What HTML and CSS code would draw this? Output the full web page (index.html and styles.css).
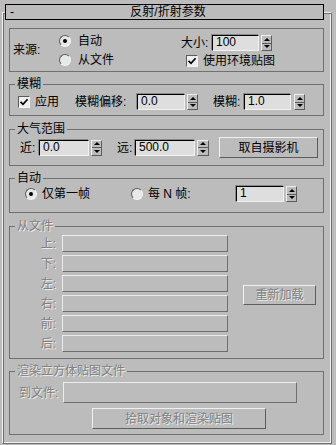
FILE: index.html
```html
<!DOCTYPE html>
<html lang="zh">
<head>
    <meta charset="UTF-8">
    <title>反射/折射参数</title>
    <link rel="stylesheet" href="styles.css">
</head>
<body>

    <div class="rollout">
        <div class="rollout-title"><span class="minus">-</span><span class="caption">反射/折射参数</span></div>

        <!-- source -->
        <div class="group g-source">
            <div class="src-label">来源:</div>
            <div class="src-radios">
                <div class="radio-row"><span class="radio on"></span><span class="opt">自动</span></div>
                <div class="radio-row"><span class="radio"></span><span class="opt">从文件</span></div>
            </div>
            <div class="src-right">
                <div class="row size-row">
                    <span class="lbl lbl-size">大小:</span>
                    <span class="input in-size">100</span>
                    <span class="spin sp-size"><i></i><i></i></span>
                </div>
                <div class="row env-row">
                    <span class="check on"><svg viewBox="0 0 10 10"><path d="M1.5 4.8 L4 7.3 L8.6 2.2"/></svg></span>
                    <span class="opt">使用环境贴图</span>
                </div>
            </div>
        </div>

        <!-- blur -->
        <div class="group g-blur">
            <div class="legend">模糊</div>
            <div class="row blur-row">
                <span class="check on"><svg viewBox="0 0 10 10"><path d="M1.5 4.8 L4 7.3 L8.6 2.2"/></svg></span>
                <span class="lbl lbl-apply">应用</span>
                <span class="lbl lbl-offset">模糊偏移:</span>
                <span class="input in-offset">0.0</span>
                <span class="spin sp-offset"><i></i><i></i></span>
                <span class="lbl lbl-blur">模糊:</span>
                <span class="input in-blur">1.0</span>
                <span class="spin sp-blur"><i></i><i></i></span>
            </div>
        </div>

        <!-- atmosphere -->
        <div class="group g-range">
            <div class="legend">大气范围</div>
            <div class="row range-row">
                <span class="lbl lbl-near">近:</span>
                <span class="input in-near">0.0</span>
                <span class="spin sp-near"><i></i><i></i></span>
                <span class="lbl lbl-far">远:</span>
                <span class="input in-far">500.0</span>
                <span class="spin sp-far"><i></i><i></i></span>
                <span class="btn btn-camera">取自摄影机</span>
            </div>
        </div>

        <!-- auto -->
        <div class="group g-auto">
            <div class="legend">自动</div>
            <div class="row auto-row">
                <span class="radio on r-first"></span>
                <span class="opt opt-first">仅第一帧</span>
                <span class="radio r-every"></span>
                <span class="opt opt-every">每 N 帧:</span>
                <span class="input in-every">1</span>
                <span class="spin sp-every"><i></i><i></i></span>
            </div>
        </div>

        <!-- from file (disabled) -->
        <div class="group g-file off">
            <div class="legend">从文件</div>
            <div class="file-body">
                <div class="file-rows">
                    <div class="file-row"><span class="lbl side">上:</span><span class="input side-in"></span></div>
                    <div class="file-row"><span class="lbl side">下:</span><span class="input side-in"></span></div>
                    <div class="file-row"><span class="lbl side">左:</span><span class="input side-in"></span></div>
                    <div class="file-row"><span class="lbl side">右:</span><span class="input side-in"></span></div>
                    <div class="file-row"><span class="lbl side">前:</span><span class="input side-in"></span></div>
                    <div class="file-row"><span class="lbl side">后:</span><span class="input side-in"></span></div>
                </div>
                <span class="btn btn-reload">重新加载</span>
            </div>
        </div>

        <!-- render cube map (disabled) -->
        <div class="group g-render off">
            <div class="legend">渲染立方体贴图文件</div>
            <div class="row tofile-row">
                <span class="lbl lbl-tofile">到文件:</span>
                <span class="input in-tofile"></span>
            </div>
            <div class="row pick-row">
                <span class="btn btn-pick">拾取对象和渲染贴图</span>
            </div>
        </div>
    </div>

</body>
</html>
```

FILE: styles.css
```css
* {
    box-sizing: border-box;
}

body {
    margin: 0;
    width: 336px;
    height: 445px;
    overflow: hidden;
    background-color: #bcbcbc;
    font-family: "Liberation Sans", "Noto Sans CJK SC", sans-serif;
    font-size: 12px;
    line-height: 14px;
    color: #000;
}

.rollout {
    margin: 12px 4px 0 2px;
    height: 432px;
    border: 1px solid;
    border-color: #f0f0f0 #6e6e6e #6e6e6e #f0f0f0;
    box-shadow: inset 1px 1px 0 #6e6e6e, inset -1px -1px 0 #f0f0f0;
}

.rollout-title {
    display: flex;
    height: 16px;
    margin: -9px 7px 0 2px;
    border: 1px solid #000;
    background-color: #bcbcbc;
}

.minus {
    width: 14px;
    padding-left: 4px;
}

.caption {
    flex: 1;
    text-align: center;
    padding-right: 7px;
}

/* group boxes */
.group {
    margin: 0 7px 0 6px;
    border: 1px solid #707070;
}

.legend {
    display: table;
    margin: -8px 0 0 5px;
    padding: 0 2px;
    background-color: #bcbcbc;
}

.row {
    display: flex;
    align-items: center;
}

.lbl, .opt {
    white-space: nowrap;
}

/* controls */
.input {
    display: block;
    height: 16px;
    padding: 0 3px;
    line-height: 13px;
    background-color: #dedede;
    border: 1px solid;
    border-color: #000 #f2f2f2 #f2f2f2 #000;
    box-shadow: -1px -1px 0 #8a8a8a;
    font-family: "Liberation Sans", sans-serif;
}

.spin {
    display: flex;
    flex-direction: column;
    width: 11px;
    height: 16px;
    margin-left: 2px;
    border: 1px solid;
    border-color: #f0f0f0 #5c5c5c #5c5c5c #f0f0f0;
}

.spin i {
    flex: 1;
    display: flex;
    align-items: center;
    justify-content: center;
}

.spin i + i {
    border-top: 1px solid #5c5c5c;
}

.spin i::after {
    content: "";
    border-left: 3px solid transparent;
    border-right: 3px solid transparent;
}

.spin i:first-child::after {
    border-bottom: 3px solid #000;
}

.spin i + i::after {
    border-top: 3px solid #000;
}

.radio {
    position: relative;
    flex: none;
    width: 12px;
    height: 12px;
    border-radius: 50%;
    border: 1px solid;
    border-color: #5c5c5c #f4f4f4 #f4f4f4 #5c5c5c;
    background-color: #e8e8e8;
}

.radio.on::after {
    content: "";
    position: absolute;
    left: 3px;
    top: 3px;
    width: 4px;
    height: 4px;
    border-radius: 50%;
    background-color: #000;
}

.check {
    flex: none;
    width: 12px;
    height: 12px;
    border: 1px solid;
    border-color: #5c5c5c #f4f4f4 #f4f4f4 #5c5c5c;
    background-color: #eeeeee;
}

.check svg {
    display: block;
    width: 10px;
    height: 10px;
}

.check path {
    fill: none;
    stroke: #000;
    stroke-width: 1.7;
}

.btn {
    display: flex;
    align-items: center;
    justify-content: center;
    height: 21px;
    border: 1px solid;
    border-color: #f0f0f0 #5c5c5c #5c5c5c #f0f0f0;
    white-space: nowrap;
}

/* disabled groups */
.off .legend, .off .lbl, .off .btn {
    color: #808080;
    text-shadow: 1px 1px 0 #ececec;
}

.off .input {
    background-color: #bcbcbc;
    border-color: #ececec #6e6e6e #6e6e6e #ececec;
    box-shadow: none;
}

/* source */
.g-source {
    display: flex;
    height: 44px;
    margin-top: 8px;
}

.src-label {
    width: 49px;
    padding-left: 3px;
    align-self: center;
}

.src-radios {
    width: 122px;
    padding-top: 2px;
}

.radio-row {
    display: flex;
    align-items: center;
    height: 19px;
}

.radio-row .opt {
    margin-left: 7px;
}

.src-right {
    padding-top: 6px;
}

.size-row {
    height: 16px;
}

.lbl-size {
    width: 31px;
}

.in-size {
    width: 47px;
}

.env-row {
    height: 14px;
    margin-top: 3px;
    padding-left: 5px;
}

.env-row .opt {
    margin-left: 5px;
}

/* blur */
.g-blur {
    height: 32px;
    margin-top: 12px;
}

.blur-row {
    height: 16px;
    margin-top: 3px;
    padding-left: 8px;
}

.lbl-apply {
    margin-left: 5px;
    width: 24px;
}

.lbl-offset {
    margin-left: 16px;
    width: 62px;
}

.in-offset {
    width: 48px;
}

.lbl-blur {
    margin-left: 15px;
    width: 31px;
}

.in-blur {
    width: 47px;
}

.sp-blur {
    margin-left: 3px;
}

/* atmosphere range */
.g-range {
    height: 37px;
    margin-top: 13px;
}

.range-row {
    height: 21px;
    margin-top: 1px;
    padding-left: 10px;
}

.lbl-near {
    width: 19px;
}

.in-near {
    width: 50px;
}

.lbl-far {
    margin-left: 15px;
    width: 18px;
}

.in-far {
    width: 60px;
}

.sp-far {
    width: 12px;
}

.btn-camera {
    margin-left: 10px;
    width: 99px;
}

/* auto */
.g-auto {
    height: 35px;
    margin-top: 12px;
}

.auto-row {
    height: 16px;
    margin-top: 1px;
    padding-left: 15px;
}

.opt-first {
    margin-left: 5px;
    width: 48px;
}

.r-every {
    margin-left: 41px;
}

.opt-every {
    margin-left: 5px;
    width: 88px;
}

.in-every {
    width: 48px;
}

/* from file */
.g-file {
    height: 133px;
    margin-top: 13px;
}

.file-body {
    display: flex;
    align-items: center;
    margin-top: 2px;
}

.file-row {
    display: flex;
    align-items: center;
    height: 17px;
    margin-bottom: 3px;
}

.side {
    width: 46px;
    text-align: right;
}

.side-in {
    margin-left: 6px;
    width: 166px;
    height: 17px;
}

.btn-reload {
    margin-left: 15px;
    width: 73px;
    height: 20px;
}

/* render cube map */
.g-render {
    height: 64px;
    margin-top: 12px;
}

.tofile-row {
    margin-top: 4px;
    padding-left: 9px;
}

.lbl-tofile {
    width: 44px;
}

.in-tofile {
    width: 234px;
    height: 21px;
}

.pick-row {
    margin-top: 5px;
    padding-left: 82px;
}

.btn-pick {
    width: 174px;
}
```
